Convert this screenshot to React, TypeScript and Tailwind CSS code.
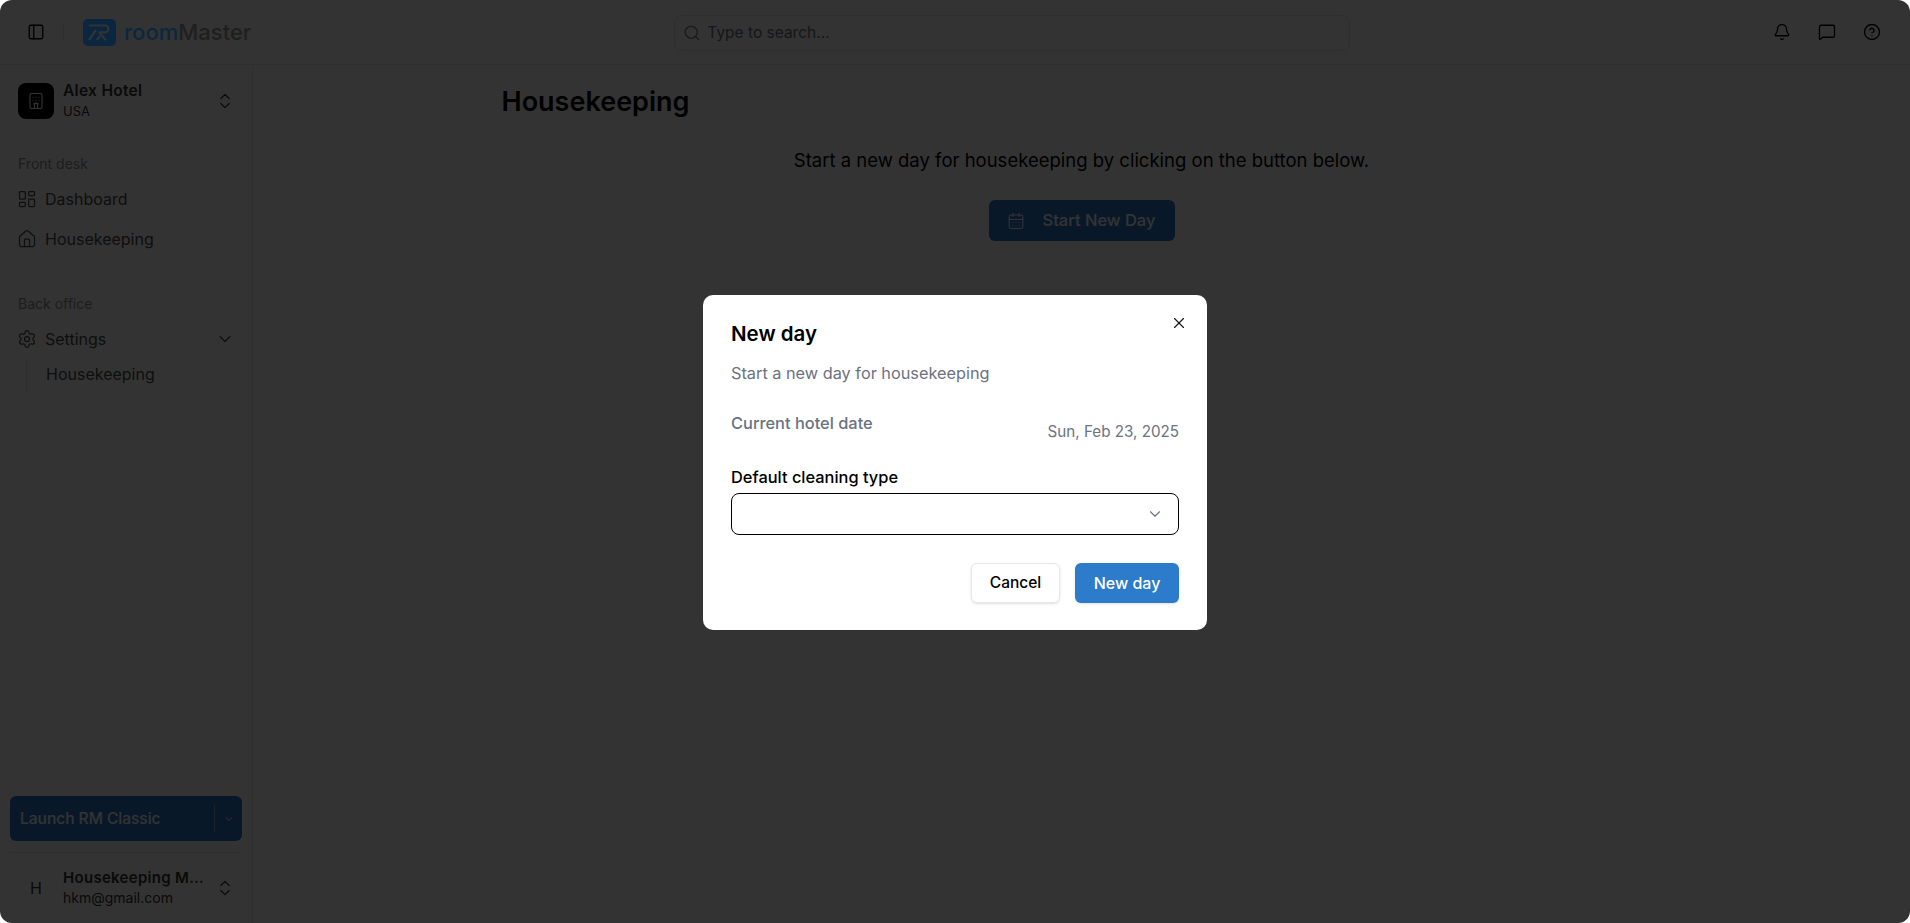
import {
  Bell,
  CalendarDays,
  ChevronDown,
  ChevronsUpDown,
  CircleHelp,
  Hotel,
  House,
  LayoutDashboard,
  MessageSquare,
  PanelLeft,
  Search,
  Settings,
  X,
} from "lucide-react";

function Logo() {
  return (
    <div className="relative z-20 flex items-center gap-2">
      <div className="flex h-[27px] w-[33px] items-center justify-center rounded-[5px] bg-[#0b2740]">
        <svg width="25" height="19" viewBox="0 0 25 19" fill="none" stroke="#333333" strokeWidth="2.2">
          <path d="M2 2.5h16a3.2 3.2 0 0 1 0 6.8h-6" />
          <path d="M12 9.3l7 8" />
          <path d="M9 7l-7 10" />
          <path d="M13 13l-3 4" />
        </svg>
      </div>
      <div className="text-[22px] leading-none font-medium">
        <span className="text-[#0b2740]">room</span>
        <span className="text-[#1f1f1f]">Master</span>
      </div>
    </div>
  );
}

function NavRow({ icon, label }: { icon: React.ReactNode; label: string }) {
  return (
    <div className="flex h-10 items-center gap-2 pl-[17px] text-[16px] text-[#4b4b4b]">
      {icon}
      <span>{label}</span>
    </div>
  );
}

function Sidebar() {
  return (
    <aside className="flex w-[253px] shrink-0 flex-col border-r border-[#e5e7eb]">
      {/* Hotel switcher */}
      <div className="mt-[16px] flex items-center pl-[18px] pr-[17px]">
        <div className="flex h-9 w-9 items-center justify-center rounded-lg bg-black">
          <Hotel className="h-[18px] w-[18px] text-white" strokeWidth={1.5} />
        </div>
        <div className="ml-[9px] flex-1">
          <p className="text-[15.5px] leading-5 font-semibold tracking-[0.3px] text-[#333]">Alex Hotel</p>
          <p className="text-[13px] leading-5 text-[#333]">USA</p>
        </div>
        <ChevronsUpDown className="h-5 w-5 text-[#333]" strokeWidth={1.5} />
      </div>

      <p className="mt-[33px] pl-[18px] text-[14px] leading-5 text-[#8f8f8f]">Front desk</p>
      <div className="mt-[5px]">
        <NavRow icon={<LayoutDashboard className="h-5 w-5" strokeWidth={1.5} />} label="Dashboard" />
        <NavRow icon={<House className="h-5 w-5" strokeWidth={1.5} />} label="Housekeeping" />
      </div>

      <p className="mt-[35px] pl-[18px] text-[14px] leading-5 text-[#8f8f8f]">Back office</p>
      <div className="mt-[5px] flex h-10 items-center gap-2 pl-[17px] pr-[17px] text-[16px] text-[#4b4b4b]">
        <Settings className="h-5 w-5" strokeWidth={1.5} />
        <span className="flex-1">Settings</span>
        <ChevronDown className="h-5 w-5" strokeWidth={1.5} />
      </div>
      <div className="ml-[26px] h-[34px] border-l border-[#e5e7eb] pl-[19px] text-[16px] leading-[31px] text-[#4b4b4b]">
        Housekeeping
      </div>

      <div className="mt-auto px-[10px]">
        <div className="flex h-[45px] items-center rounded-md bg-[#2d7bcb] pl-[10px] text-[15.5px] font-medium text-white">
          <span className="flex-1">Launch RM Classic</span>
          <div className="flex h-[27px] w-7 items-center justify-center border-l border-[#ffffff66]">
            <ChevronDown className="h-3 w-3" />
          </div>
        </div>
      </div>
      <div className="mx-[10px] mt-[11px] flex h-[71px] items-center border-t border-[#e5e7eb] pl-[8px] pr-[7px]">
        <div className="flex h-9 w-9 items-center justify-center rounded-lg text-[16px] text-[#333]">H</div>
        <div className="ml-[9px] min-w-0 flex-1">
          <p className="w-[141px] truncate text-[15px] leading-5 font-semibold tracking-[0.3px] text-[#333]">
            Housekeeping Manager
          </p>
          <p className="text-[14px] leading-5 text-[#333]">hkm@gmail.com</p>
        </div>
        <ChevronsUpDown className="h-5 w-5 text-[#333]" strokeWidth={1.5} />
      </div>
    </aside>
  );
}

export default function App() {
  return (
    <div className="relative flex h-screen flex-col overflow-hidden bg-white [font-family:Inter,sans-serif] text-black">
      {/* Top bar */}
      <header className="flex h-[65px] shrink-0 items-center border-b border-[#e5e7eb] pl-[27px] pr-[29px]">
        <PanelLeft className="h-[18px] w-[18px] text-black" strokeWidth={1.75} />
        <div className="ml-[18px] mr-[19px] h-[18px] w-px bg-[#e5e7eb]" />
        <Logo />
        <div className="ml-[423px] mt-[2px] flex h-9 w-[676px] items-center gap-[6px] rounded-lg border border-[#e5e7eb] px-[8px] text-[15.5px] text-[#6b7280]">
          <Search className="h-[18px] w-[18px]" strokeWidth={1.5} />
          <span>Type to search...</span>
        </div>
        <div className="ml-auto flex items-center gap-[27px] text-black">
          <Bell className="h-[18px] w-[18px]" strokeWidth={1.75} />
          <MessageSquare className="h-[18px] w-[18px]" strokeWidth={1.75} />
          <CircleHelp className="h-[18px] w-[18px]" strokeWidth={1.75} />
        </div>
      </header>

      <div className="flex min-h-0 flex-1">
        <Sidebar />
        <main className="flex-1">
          <div className="mx-auto w-[1160px] pt-[19px]">
            <h1 className="text-[27px] leading-9 font-semibold text-black">Housekeeping</h1>
            <div className="mt-[26px] flex flex-col items-center">
              <p className="text-[18.5px] leading-7 text-black">
                Start a new day for housekeeping by clicking on the button below.
              </p>
              <button className="mt-[26px] flex h-[41px] w-[186px] items-center gap-[18px] rounded-md bg-[#2d7bcb] pl-[18px] text-[16.5px] font-medium text-white">
                <CalendarDays className="h-[18px] w-[18px]" strokeWidth={1.5} />
                Start New Day
              </button>
            </div>
          </div>
        </main>
      </div>

      {/* Dialog overlay */}
      <div className="absolute inset-0 z-10 flex items-center justify-center rounded-xl bg-black/80 pt-[2px]">
        <div className="relative flex h-[335px] w-[504px] flex-col rounded-[10px] bg-white px-[28px] pt-[25px]">
          <button className="absolute right-[19px] top-[19px] text-[#111]">
            <X className="h-[18px] w-[18px]" strokeWidth={1.5} />
          </button>
          <h2 className="text-[20.5px] leading-7 font-semibold text-black">New day</h2>
          <p className="mt-[13px] text-[16.3px] leading-6 text-[#6b7280]">Start a new day for housekeeping</p>
          <div className="mt-[26px] flex justify-between">
            <span className="text-[16.4px] leading-6 font-medium text-[#6b7280]">Current hotel date</span>
            <span className="mt-[9px] text-[15.2px] leading-6 text-[#6b7280]">Sun, Feb 23, 2025</span>
          </div>
          <label className="mt-[21px] text-[16.4px] leading-6 font-medium text-black">Default cleaning type</label>
          <div className="mt-[4px] flex h-[42px] items-center justify-end rounded-lg border-[1.5px] border-black pr-[14px]">
            <ChevronDown className="h-[18px] w-[18px] text-[#6b7280]" strokeWidth={1.5} />
          </div>
          <div className="mt-[28px] flex justify-end gap-[15px]">
            <button className="h-10 w-[89px] rounded-md border border-[#e5e7eb] text-[15.5px] font-medium text-black shadow-sm">
              Cancel
            </button>
            <button className="h-10 w-[104px] rounded-md bg-[#2d7bcb] text-[16px] font-medium text-white shadow-sm">
              New day
            </button>
          </div>
        </div>
      </div>
    </div>
  );
}
